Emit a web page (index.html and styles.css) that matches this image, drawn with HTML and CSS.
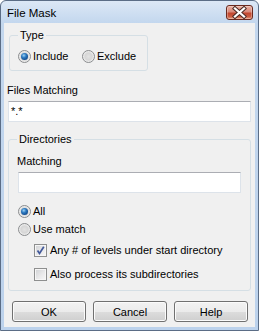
FILE: index.html
```html
<!DOCTYPE html>
<html lang="en">
<head>
    <meta charset="UTF-8">
    <title>File Mask</title>
    <link rel="stylesheet" href="styles.css">
</head>
<body>
    <div class="window">
        <div class="titlebar">
            <span class="title">File Mask</span>
            <button class="close" aria-label="Close">
                <svg width="25" height="13" viewBox="0 0 25 13">
                    <path d="M8 2.5 L17 10.5 M17 2.5 L8 10.5" stroke="#4a2a24" stroke-width="4.2" stroke-linecap="square"/>
                    <path d="M8 2.5 L17 10.5 M17 2.5 L8 10.5" stroke="#ffffff" stroke-width="2.3" stroke-linecap="square"/>
                </svg>
            </button>
        </div>

        <div class="client">
            <fieldset class="type-box">
                <legend>Type</legend>
                <div class="type-row">
                    <label class="opt opt-first"><span class="radio on"></span>Include</label>
                    <label class="opt"><span class="radio"></span>Exclude</label>
                </div>
            </fieldset>

            <div class="files-label">Files Matching</div>
            <div class="textbox wide">*.*</div>

            <fieldset class="dirs">
                <legend>Directories</legend>
                <div class="dirs-label">Matching</div>
                <div class="textbox narrow"></div>

                <label class="opt opt-all"><span class="radio on"></span>All</label>
                <label class="opt opt-use"><span class="radio"></span>Use match</label>

                <label class="opt chk-any">
                    <span class="check">
                        <svg width="11" height="11" viewBox="0 0 11 11">
                            <path d="M2.5 5.5 L4.5 8.5 L8.8 1.8" fill="none" stroke="#42599a" stroke-width="1.7"/>
                        </svg>
                    </span>Any # of levels under start directory</label>
                <label class="opt chk-also"><span class="check"></span>Also process its subdirectories</label>
            </fieldset>

            <div class="buttons">
                <button class="btn">OK</button>
                <button class="btn">Cancel</button>
                <button class="btn">Help</button>
            </div>
        </div>
    </div>
</body>
</html>
```

FILE: styles.css
```css
* {
    font-family: "Liberation Sans", Arial, sans-serif;
}

body {
    margin: 0;
    font-size: 11px;
    color: #000000;
}

.window {
    width: 259px;
    height: 331px;
    box-sizing: border-box;
    border: 1px solid #5b6d86;
    border-radius: 6px 6px 0 0;
    background: linear-gradient(#dce8f6, #c3d7ee 22px, #bcd2ec);
    padding: 0 3px 3px 3px;
    display: flex;
    flex-direction: column;
}

.titlebar {
    height: 22px;
    display: flex;
    align-items: flex-start;
}

.title {
    margin: 2px 0 0 3px;
    line-height: 20px;
    font-size: 11.5px;
}

.close {
    margin: 4px 2px 0 auto;
    width: 27px;
    height: 15px;
    padding: 0;
    border: 1px solid #6b2a1f;
    border-radius: 3px;
    background: linear-gradient(#ebb1a2 0%, #d8897a 45%, #c2472f 55%, #c95a40 80%, #e49a7c 100%);
    box-shadow: inset 0 0 0 1px rgba(255, 255, 255, 0.3);
    display: flex;
    align-items: center;
    justify-content: center;
}

.client {
    flex: 1;
    background-color: #f0f0f0;
    display: flex;
    flex-direction: column;
    align-items: flex-start;
}

fieldset {
    margin: 0;
    padding: 0;
    min-width: 0;
    box-sizing: border-box;
    border: 1px solid #d5dfe5;
    border-radius: 3px;
}

legend {
    padding: 0 2px;
    line-height: 14px;
}

.type-box {
    margin: 5px 0 0 5px;
    width: 139px;
    padding: 8px 0 7px 8px;
}

.type-row {
    display: flex;
}

.opt {
    display: flex;
    align-items: center;
    height: 13px;
    line-height: 13px;
}

.opt-first {
    width: 64px;
}

/* radio buttons */
.radio {
    width: 13px;
    height: 13px;
    box-sizing: border-box;
    border-radius: 50%;
    border: 1px solid #8a8c8e;
    background: radial-gradient(circle, #e2e2e2 0, #d6d6d6 45%, #f4f4f4 75%, #fbfbfb 100%);
    margin-right: 2px;
    display: flex;
    align-items: center;
    justify-content: center;
    flex-shrink: 0;
}

.radio.on::after {
    content: "";
    width: 7px;
    height: 7px;
    border-radius: 50%;
    background: radial-gradient(circle at 40% 35%, #9fd3f5 0, #2f7cc2 35%, #17559a 65%, #123f78 100%);
}

/* checkboxes */
.check {
    width: 13px;
    height: 13px;
    box-sizing: border-box;
    border: 1px solid #8e8f8f;
    background: linear-gradient(135deg, #cfd1d4 0%, #e9e9ea 55%, #f8f8f8 100%);
    box-shadow: inset 0 0 0 1px #f6f6f6;
    margin-right: 3px;
    flex-shrink: 0;
    display: flex;
}

.files-label {
    margin: 12px 0 0 3px;
    line-height: 14px;
}

.textbox {
    height: 21px;
    box-sizing: border-box;
    background-color: #ffffff;
    border: 1px solid #dde3ea;
    border-top-color: #abadb3;
    line-height: 19px;
    padding-left: 2px;
}

.textbox.wide {
    margin: 4px 0 0 4px;
    width: 243px;
}

.dirs {
    margin: 10px 0 0 4px;
    width: 243px;
    padding: 0 8px 9px 8px;
}

.dirs-label {
    margin-top: 8px;
    line-height: 14px;
}

.textbox.narrow {
    margin: 4px 0 0 1px;
    width: 223px;
}

.opt-all {
    margin: 12px 0 0 1px;
}

.opt-use {
    margin: 5px 0 0 1px;
}

.chk-any {
    margin: 8px 0 0 17px;
}

.chk-also {
    margin: 11px 0 0 17px;
}

.buttons {
    margin: 10px 0 0 8px;
    display: flex;
    gap: 7px;
}

.btn {
    width: 74px;
    height: 21px;
    padding: 0;
    font-size: 11px;
    border: 1px solid #707070;
    border-radius: 3px;
    background: linear-gradient(#f2f2f2 0%, #ebebeb 50%, #dddddd 50%, #cfcfcf 100%);
    box-shadow: inset 0 0 0 1px #fbfbfb;
    color: #000000;
}
```
